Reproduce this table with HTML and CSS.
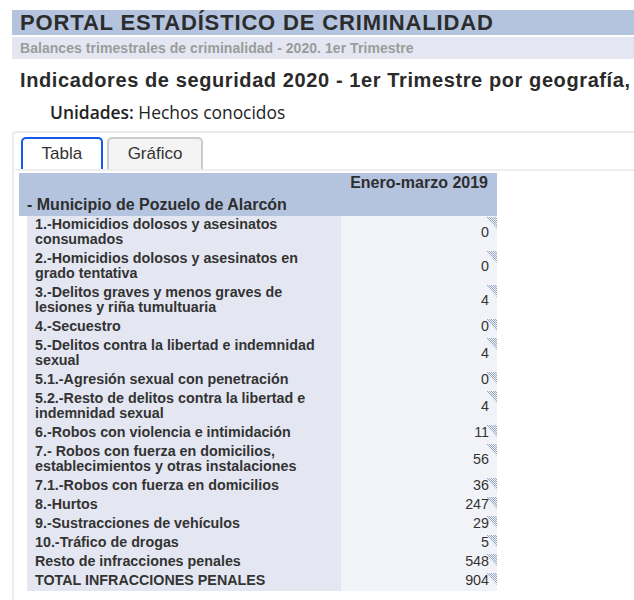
FILE: index.html
```html
<!DOCTYPE html>
<html lang="es">
<head>
<meta charset="utf-8">
<title>Portal Estadístico de Criminalidad</title>
<link rel="stylesheet" href="styles.css">
</head>
<body>
<div class="bar-main">PORTAL ESTADÍSTICO DE CRIMINALIDAD</div>
<div class="bar-sub">Balances trimestrales de criminalidad - 2020. 1er Trimestre</div>
<h1 class="indicador">Indicadores de seguridad 2020 - 1er Trimestre por geografía,</h1>
<p class="unidades"><strong>Unidades:</strong> Hechos conocidos</p>

<div class="panel">
  <div class="tabs">
    <div class="tab active">Tabla</div>
    <div class="tab">Gráfico</div>
  </div>
  <table class="datos">
    <colgroup>
      <col class="c-indent">
      <col class="c-label">
      <col class="c-value">
    </colgroup>
    <thead>
      <tr class="h-period">
        <th colspan="2"></th>
        <th class="period">Enero-marzo 2019</th>
      </tr>
      <tr class="h-geo">
        <th colspan="3" class="geo">- Municipio de Pozuelo de Alarcón</th>
      </tr>
    </thead>
    <tbody>
      <tr><td class="ind"></td><td class="lbl">1.-Homicidios dolosos y asesinatos consumados</td><td class="val"><span class="flag"></span>0</td></tr>
      <tr><td class="ind"></td><td class="lbl">2.-Homicidios dolosos y asesinatos en grado tentativa</td><td class="val"><span class="flag"></span>0</td></tr>
      <tr><td class="ind"></td><td class="lbl">3.-Delitos graves y menos graves de lesiones y riña tumultuaria</td><td class="val"><span class="flag"></span>4</td></tr>
      <tr><td class="ind"></td><td class="lbl">4.-Secuestro</td><td class="val"><span class="flag"></span>0</td></tr>
      <tr><td class="ind"></td><td class="lbl">5.-Delitos contra la libertad e indemnidad sexual</td><td class="val"><span class="flag"></span>4</td></tr>
      <tr><td class="ind"></td><td class="lbl">5.1.-Agresión sexual con penetración</td><td class="val"><span class="flag"></span>0</td></tr>
      <tr><td class="ind"></td><td class="lbl">5.2.-Resto de delitos contra la libertad e indemnidad sexual</td><td class="val"><span class="flag"></span>4</td></tr>
      <tr><td class="ind"></td><td class="lbl">6.-Robos con violencia e intimidación</td><td class="val"><span class="flag"></span>11</td></tr>
      <tr><td class="ind"></td><td class="lbl">7.- Robos con fuerza en domicilios, establecimientos y otras instalaciones</td><td class="val"><span class="flag"></span>56</td></tr>
      <tr><td class="ind"></td><td class="lbl">7.1.-Robos con fuerza en domicilios</td><td class="val"><span class="flag"></span>36</td></tr>
      <tr><td class="ind"></td><td class="lbl">8.-Hurtos</td><td class="val"><span class="flag"></span>247</td></tr>
      <tr><td class="ind"></td><td class="lbl">9.-Sustracciones de vehículos</td><td class="val"><span class="flag"></span>29</td></tr>
      <tr><td class="ind"></td><td class="lbl">10.-Tráfico de drogas</td><td class="val"><span class="flag"></span>5</td></tr>
      <tr><td class="ind"></td><td class="lbl">Resto de infracciones penales</td><td class="val"><span class="flag"></span>548</td></tr>
      <tr><td class="ind"></td><td class="lbl">TOTAL INFRACCIONES PENALES</td><td class="val"><span class="flag"></span>904</td></tr>
    </tbody>
  </table>
</div>
</body>
</html>
```

FILE: styles.css
```css
html, body {
  margin: 0;
  padding: 0;
  overflow: hidden;
  background: #ffffff;
}

body {
  padding: 10px 0 0 12px;
  font-family: "Liberation Sans", Arial, sans-serif;
  color: #333333;
}

.bar-main {
  height: 25px;
  line-height: 25px;
  padding-left: 8px;
  background: #b4c4de;
  color: #2c2c2c;
  font-size: 22px;
  font-weight: bold;
  letter-spacing: 0.85px;
  white-space: nowrap;
}

.bar-sub {
  margin-top: 2px;
  height: 22px;
  line-height: 22px;
  padding-left: 8px;
  background: #e4e7f2;
  color: #9b9b9b;
  font-size: 14px;
  font-weight: bold;
  letter-spacing: 0.05px;
  white-space: nowrap;
}

.indicador {
  margin: 9px 0 0 0;
  padding-left: 8px;
  font-size: 20px;
  line-height: 24px;
  letter-spacing: 0.6px;
  font-weight: bold;
  color: #2a2a2a;
  white-space: nowrap;
}

.unidades {
  margin: 9px 0 0 38px;
  font-family: "Open Sans", "Noto Sans", sans-serif;
  font-size: 17.4px;
  line-height: 22px;
  color: #222222;
}

.unidades strong {
  font-weight: 600;
}

.panel {
  margin-top: 8px;
  border-top: 2px solid #ececec;
  border-left: 2px solid #ececec;
  border-top-left-radius: 4px;
  padding: 4px 0 40px 1px;
}

.tabs {
  display: flex;
  gap: 4px;
  padding-left: 6px;
  border-bottom: 2px solid #eeeeee;
}

.tab {
  height: 30px;
  line-height: 30px;
  padding: 0 19px;
  font-size: 17px;
  color: #333333;
  background: #f4f4f4;
  border: 2px solid #cccccc;
  border-bottom: none;
  border-radius: 5px 5px 0 0;
}

.tab.active {
  background: #ffffff;
  border-color: #1559f0;
  padding: 0 18.5px;
}

.datos {
  margin: 2px 0 0 4px;
  border-collapse: collapse;
  border-spacing: 0;
  table-layout: fixed;
  width: 478px;
  font-size: 14.3px;
}

.c-indent { width: 8px; }
.c-label { width: 314px; }
.c-value { width: 156px; }

.datos th {
  background: #b4c4de;
  padding: 0;
  font-size: 16px;
  font-weight: bold;
  color: #2e2e2e;
}

.h-period th {
  height: 20px;
  line-height: 18px;
  vertical-align: top;
  padding-top: 1px;
}

.period {
  text-align: right;
  padding-right: 9px !important;
}

.h-geo th {
  height: 20px;
  line-height: 18px;
  vertical-align: bottom;
  padding-bottom: 2px;
}

.geo {
  text-align: left;
  padding-left: 8px !important;
}

.datos td {
  padding: 1px 0 3px;
  line-height: 15px;
}

.ind {
  background: #ffffff;
}

.lbl {
  background: #e4e7f2;
  font-weight: bold;
  color: #333333;
  padding-left: 8px !important;
  padding-right: 8px !important;
}

.val {
  position: relative;
  background: #f1f3f8;
  text-align: right;
  vertical-align: middle;
  padding-right: 8px !important;
  color: #333333;
}

.flag {
  position: absolute;
  top: 1px;
  right: 0;
  width: 11px;
  height: 12px;
  background-image: conic-gradient(#98a7c2 25%, transparent 0 50%, #98a7c2 0 75%, transparent 0);
  background-size: 2px 2px;
  clip-path: polygon(0 0, 100% 0, 100% 100%);
}
```
